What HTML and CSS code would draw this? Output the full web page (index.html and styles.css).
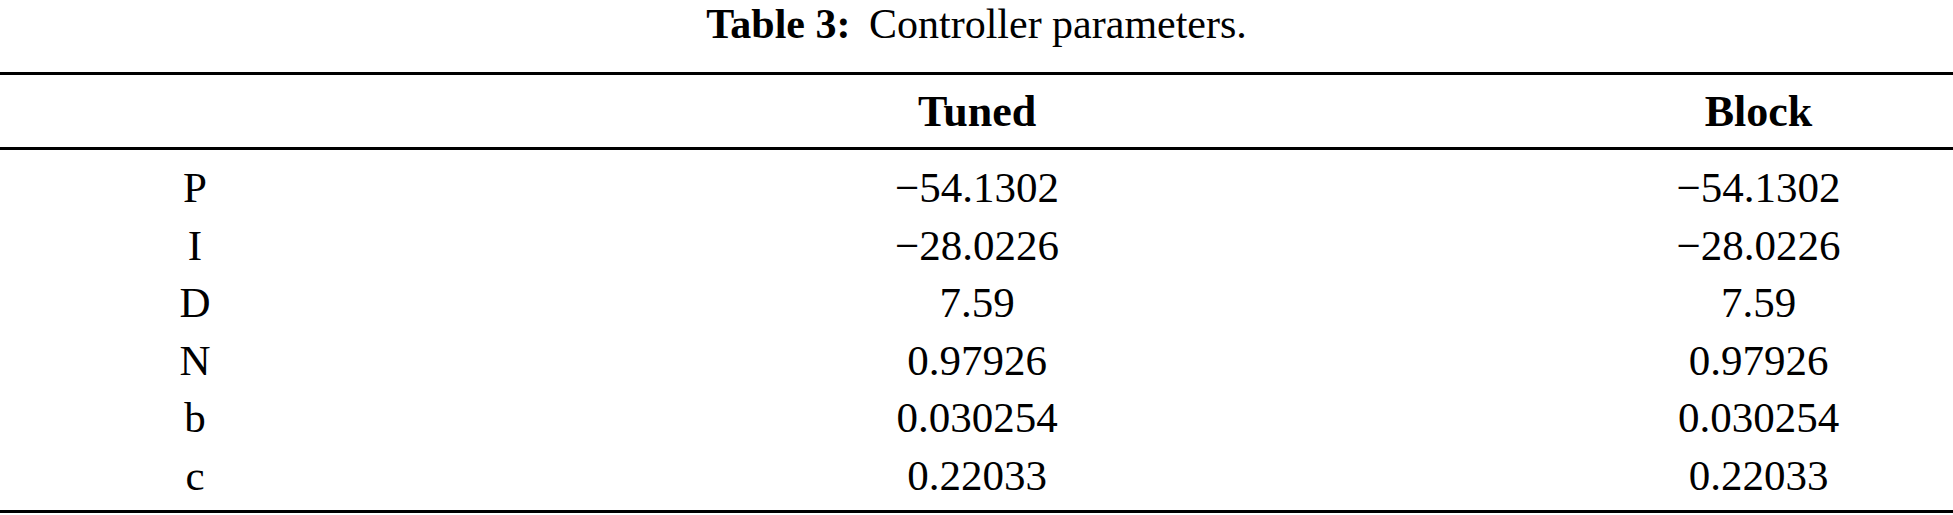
FILE: index.html
```html
<!DOCTYPE html>
<html>
<head>
<meta charset="utf-8">
<link rel="stylesheet" href="styles.css">
</head>
<body>
<div class="page">
  <div class="caption"><span class="cap-label">Table 3:</span> Controller parameters.</div>
  <table class="params">
    <colgroup>
      <col class="c-name">
      <col class="c-tuned">
      <col class="c-block">
    </colgroup>
    <thead>
      <tr><th></th><th>Tuned</th><th>Block</th></tr>
    </thead>
    <tbody>
      <tr class="first"><td>P</td><td>&minus;54.1302</td><td>&minus;54.1302</td></tr>
      <tr><td>I</td><td>&minus;28.0226</td><td>&minus;28.0226</td></tr>
      <tr><td>D</td><td>7.59</td><td>7.59</td></tr>
      <tr><td>N</td><td>0.97926</td><td>0.97926</td></tr>
      <tr><td>b</td><td>0.030254</td><td>0.030254</td></tr>
      <tr class="last"><td>c</td><td>0.22033</td><td>0.22033</td></tr>
    </tbody>
  </table>
</div>
</body>
</html>
```

FILE: styles.css
```css
html, body {
  margin: 0;
  padding: 0;
  background: #ffffff;
}
.page {
  width: 1953px;
  font-family: "Liberation Serif", "Times New Roman", serif;
  color: #000;
}
.caption {
  text-align: center;
  font-size: 42px;
  line-height: 48px;
  height: 72px;
}
.cap-label {
  font-weight: bold;
  margin-right: 8px;
}
.params {
  width: 1953px;
  border-collapse: collapse;
  table-layout: fixed;
  font-size: 43px;
  border-top: 3px solid #000;
  border-bottom: 3px solid #000;
}
.c-name { width: 390px; }
.c-tuned { width: 1174px; }
.c-block { width: 389px; }
.params th {
  font-size: 44px;
  font-weight: bold;
  height: 72px;
  padding: 0;
  text-align: center;
  vertical-align: middle;
  border-bottom: 3px solid #000;
}
.params td {
  text-align: center;
  padding: 0;
  height: 57.5px;
  line-height: 57.5px;
}
.params tr.first td {
  padding-top: 9px;
}
.params tr.last td {
  padding-bottom: 6px;
}
```
